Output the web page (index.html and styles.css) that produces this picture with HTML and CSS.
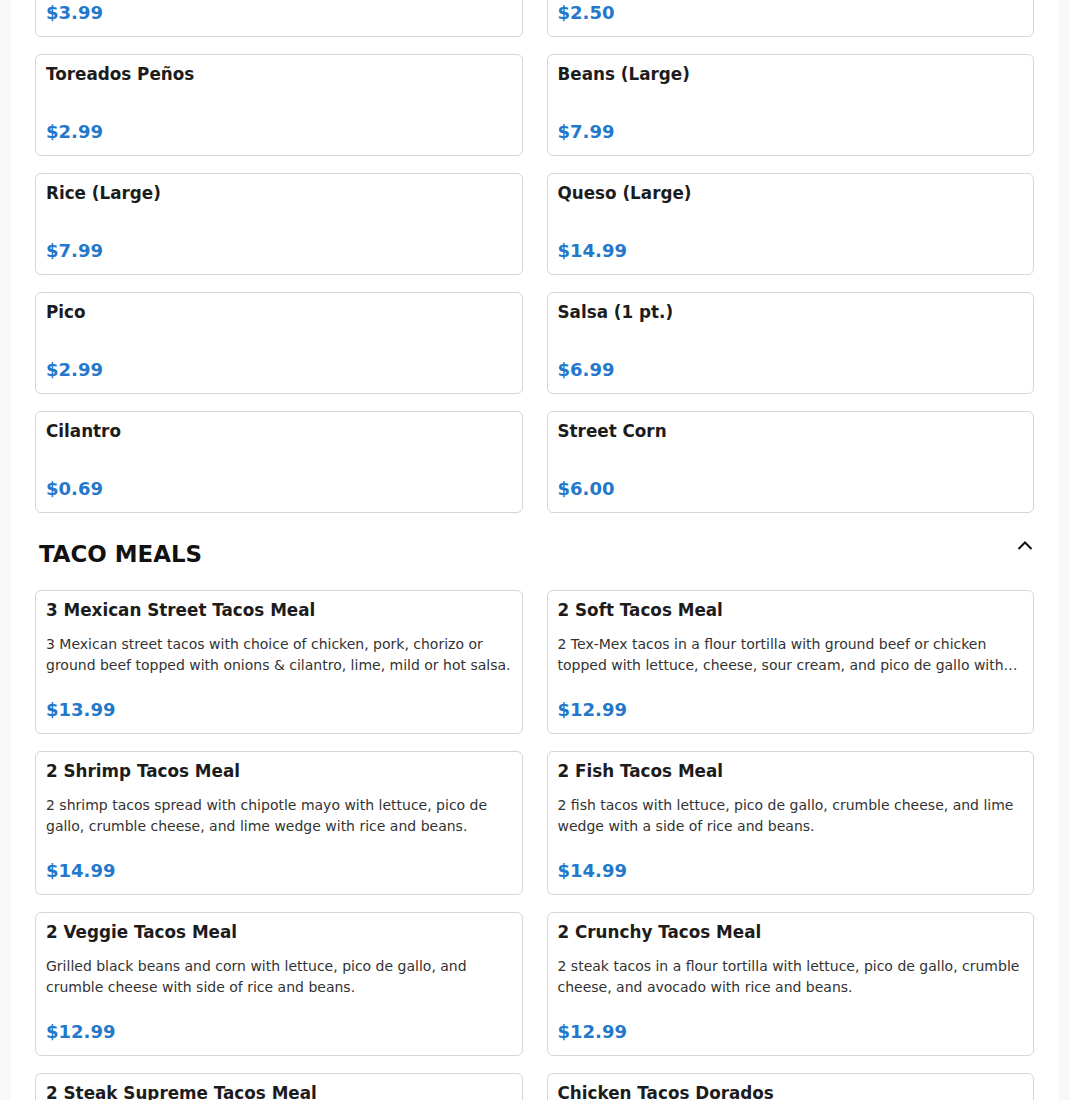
FILE: index.html
```html
<!DOCTYPE html>
<html lang="en">
<head>
<meta charset="utf-8">
<title>Menu</title>
<link rel="stylesheet" href="styles.css">
</head>
<body>
<main class="page">
  <section class="section section-sides">
    <div class="grid">
      <div class="card"><div class="name">Chips &amp; Salsa</div><div class="desc"></div><div class="price">$3.99</div></div>
      <div class="card"><div class="name">Chips</div><div class="desc"></div><div class="price">$2.50</div></div>
      <div class="card"><div class="name">Toreados Peños</div><div class="desc"></div><div class="price">$2.99</div></div>
      <div class="card"><div class="name">Beans (Large)</div><div class="desc"></div><div class="price">$7.99</div></div>
      <div class="card"><div class="name">Rice (Large)</div><div class="desc"></div><div class="price">$7.99</div></div>
      <div class="card"><div class="name">Queso (Large)</div><div class="desc"></div><div class="price">$14.99</div></div>
      <div class="card"><div class="name">Pico</div><div class="desc"></div><div class="price">$2.99</div></div>
      <div class="card"><div class="name">Salsa (1 pt.)</div><div class="desc"></div><div class="price">$6.99</div></div>
      <div class="card"><div class="name">Cilantro</div><div class="desc"></div><div class="price">$0.69</div></div>
      <div class="card"><div class="name">Street Corn</div><div class="desc"></div><div class="price">$6.00</div></div>
    </div>
  </section>

  <section class="section">
    <header class="section-head">
      <h2 class="section-title">TACO MEALS</h2>
      <button class="toggle" type="button" aria-label="Collapse">
        <svg width="16" height="16" viewBox="0 0 16 16" aria-hidden="true"><path d="M1.5 11 L8 4.5 L14.5 11" fill="none" stroke="#111" stroke-width="2" stroke-linecap="butt" stroke-linejoin="miter"/></svg>
      </button>
    </header>
    <div class="grid">
      <div class="card"><div class="name">3 Mexican Street Tacos Meal</div><div class="desc">3 Mexican street tacos with choice of chicken, pork, chorizo or ground beef topped with onions &amp; cilantro, lime, mild or hot salsa.</div><div class="price">$13.99</div></div>
      <div class="card"><div class="name">2 Soft Tacos Meal</div><div class="desc">2 Tex-Mex tacos in a flour tortilla with ground beef or chicken topped with lettuce, cheese, sour cream, and pico de gallo with rice and beans.</div><div class="price">$12.99</div></div>
      <div class="card"><div class="name">2 Shrimp Tacos Meal</div><div class="desc">2 shrimp tacos spread with chipotle mayo with lettuce, pico de gallo, crumble cheese, and lime wedge with rice and beans.</div><div class="price">$14.99</div></div>
      <div class="card"><div class="name">2 Fish Tacos Meal</div><div class="desc">2 fish tacos with lettuce, pico de gallo, crumble cheese, and lime wedge with a side of rice and beans.</div><div class="price">$14.99</div></div>
      <div class="card"><div class="name">2 Veggie Tacos Meal</div><div class="desc">Grilled black beans and corn with lettuce, pico de gallo, and crumble cheese with side of rice and beans.</div><div class="price">$12.99</div></div>
      <div class="card"><div class="name">2 Crunchy Tacos Meal</div><div class="desc">2 steak tacos in a flour tortilla with lettuce, pico de gallo, crumble cheese, and avocado with rice and beans.</div><div class="price">$12.99</div></div>
      <div class="card"><div class="name">2 Steak Supreme Tacos Meal</div><div class="desc">2 steak tacos with sour cream, lettuce, cheese, and pico de gallo with rice and beans.</div><div class="price">$14.99</div></div>
      <div class="card"><div class="name">Chicken Tacos Dorados</div><div class="desc">Crispy rolled chicken tacos topped with lettuce, sour cream, and crumble cheese with rice and beans.</div><div class="price">$12.99</div></div>
    </div>
  </section>
</main>
</body>
</html>
```

FILE: styles.css
```css
html, body {
  margin: 0;
  padding: 0;
}

body {
  background: #f8f8f8;
  font-family: "DejaVu Sans", "Liberation Sans", sans-serif;
  color: #1f1f1f;
}

.page {
  max-width: 1048px;
  margin: 0 auto;
  background: #ffffff;
  padding: 0 25px 40px 24px;
  box-sizing: border-box;
  min-height: 1200px;
}

.section-sides {
  margin-top: -65px;
}

.grid {
  display: grid;
  grid-template-columns: 1fr 1fr;
  column-gap: 24px;
  row-gap: 17px;
}

.card {
  border: 1px solid #d6d6d6;
  border-radius: 6px;
  padding: 9px 10px 11px;
  display: flex;
  flex-direction: column;
  background: #fff;
}

.name {
  font-weight: bold;
  font-size: 16.8px;
  line-height: 20px;
  color: #1c1c1c;
}

.desc {
  margin-top: 14px;
  font-size: 14px;
  line-height: 21px;
  color: #333;
  display: -webkit-box;
  -webkit-line-clamp: 2;
  -webkit-box-orient: vertical;
  overflow: hidden;
}

.price {
  margin-top: auto;
  padding-top: 22px;
  font-weight: bold;
  font-size: 18px;
  line-height: 24px;
  color: #2478cc;
}

.section-head {
  display: flex;
  justify-content: space-between;
  align-items: flex-start;
  padding: 25px 0 20px 4px;
}

.section-title {
  margin: 0;
  font-size: 22.9px;
  line-height: 32px;
  font-weight: bold;
  color: #111;
}

.toggle {
  border: 0;
  background: transparent;
  padding: 0;
  margin-top: 0;
  margin-right: 1px;
  width: 16px;
  height: 16px;
  display: flex;
  cursor: pointer;
}
```
